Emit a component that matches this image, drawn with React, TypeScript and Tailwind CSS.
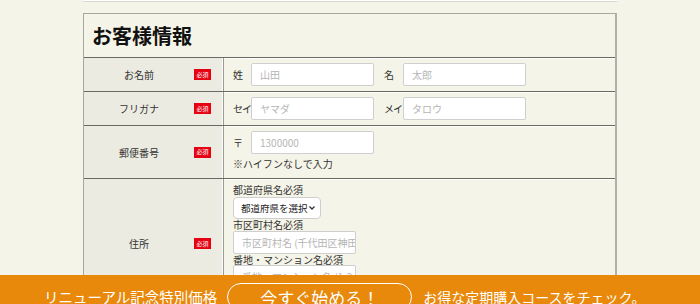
import React from "react";

const Badge = () => (
  <span className="ml-auto mr-[12px] flex h-[11px] w-[17px] shrink-0 items-center justify-center bg-[#e60012] text-[6px] leading-none text-white">
    必須
  </span>
);

const Label = ({ text }: { text: string }) => (
  <div className="flex items-center border-r border-r-[#9a9a90] bg-[#ebebe1] shadow-[inset_-1px_0_0_#ffffff]">
    <span className="w-[120px] text-center text-[10px] text-[#333]">{text}</span>
    <Badge />
  </div>
);

const Input = ({ ph, w = "w-[123px]" }: { ph: string; w?: string }) => (
  <div className={`flex h-[23px] ${w} shrink-0 items-center overflow-hidden whitespace-nowrap rounded-[2px] border border-[#cfcfcf] bg-white px-[8px] text-[10px] text-[#b5b5b5]`}>
    {ph}
  </div>
);

const Row = ({ label, children, cls }: { label: string; children: React.ReactNode; cls: string }) => (
  <div className={`grid grid-cols-[140px_1fr] border-t border-t-[#6a6a62] shadow-[inset_0_1px_0_#ffffff] ${cls}`}>
    <Label text={label} />
    <div className="pl-[9px]">{children}</div>
  </div>
);

export default function App() {
  const font = { fontFamily: '"Noto Sans CJK JP", "Noto Sans", sans-serif' };
  return (
    <div className="relative h-[304px] w-[700px] overflow-hidden bg-[#f5f4e8]" style={font}>
      <div className="mx-auto h-[2px] w-[534px] border-b border-[#d8d8cc] bg-white" />
      <div className="mx-auto mt-[11px] w-[534px] border border-[#a8a8a0] border-r-2 border-r-[#b0b0a8] bg-[#f5f4e8]">
        <div className="flex h-[43px] items-center pl-[8px]">
          <h2 className="text-[20px] font-bold text-[#111]">お客様情報</h2>
        </div>
        <Row label="お名前" cls="h-[34px]">
          <div className="flex h-full items-center whitespace-nowrap text-[10px] text-[#333]">
            <span className="w-[18px] shrink-0">姓</span>
            <Input ph="山田" />
            <span className="ml-[10px] w-[19px] shrink-0">名</span>
            <Input ph="太郎" />
          </div>
        </Row>
        <Row label="フリガナ" cls="h-[34px]">
          <div className="flex h-full items-center whitespace-nowrap text-[10px] text-[#333]">
            <span className="w-[18px] shrink-0 tracking-[-1px]">セイ</span>
            <Input ph="ヤマダ" />
            <span className="ml-[10px] w-[19px] shrink-0 tracking-[-1px]">メイ</span>
            <Input ph="タロウ" />
          </div>
        </Row>
        <Row label="郵便番号" cls="h-[53px]">
          <div className="pt-[5px] text-[10px] text-[#333]">
            <div className="flex items-center">
              <span className="w-[18px] shrink-0">〒</span>
              <Input ph="1300000" />
            </div>
            <div className="mt-[3px] leading-[14px]">※ハイフンなしで入力</div>
          </div>
        </Row>
        <Row label="住所" cls="h-[130px]">
          <div className="pt-[4px] text-[10px] leading-[13px] text-[#333]">
            <div>都道府県名必須</div>
            <div className="mt-[1px] flex h-[22px] w-[88px] items-center justify-between whitespace-nowrap rounded-[4px] border border-[#cfcfcf] bg-white pl-[7px] pr-[4px] text-[9.5px] text-[#222]">
              <span>都道府県を選択</span>
              <svg width="8" height="6" viewBox="0 0 8 6" className="shrink-0"><path d="M1.5 1.5 L4 4 L6.5 1.5" stroke="#333" strokeWidth="1.3" fill="none" /></svg>
            </div>
            <div className="leading-[12px]">市区町村名必須</div>
            <Input ph="市区町村名 (千代田区神田神保町)" />
            <div className="leading-[11px]">番地・マンション名必須</div>
            <Input ph="番地・マンション名 (1-2-3)" />
          </div>
        </Row>
      </div>
      <div className="absolute bottom-[-15px] left-0 flex h-[44px] w-full items-center whitespace-nowrap bg-[#e8890b] pl-[44px] text-white">
        <span className="text-[14.5px] leading-none">リニューアル記念特別価格</span>
        <span className="ml-[10px] flex h-[28px] w-[185px] shrink-0 items-center justify-center rounded-full border-[1.5px] border-white text-[17px] leading-none">
          今すぐ始める！
        </span>
        <span className="ml-[11px] text-[14px] leading-none">お得な定期購入コースをチェック。</span>
      </div>
    </div>
  );
}
